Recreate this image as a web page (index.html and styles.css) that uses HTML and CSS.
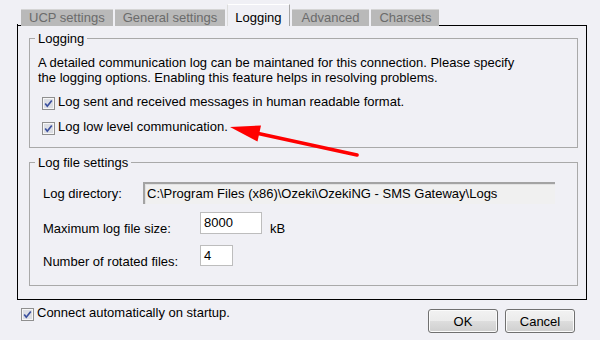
FILE: index.html
```html
<!DOCTYPE html>
<html>
<head>
<meta charset="utf-8">
<link rel="stylesheet" href="styles.css">
</head>
<body>
<div class="dialog">
  <div class="tabs">
    <div class="tab">UCP settings</div>
    <div class="tab">General settings</div>
    <div class="tab active">Logging</div>
    <div class="tab wide">Advanced</div>
    <div class="tab">Charsets</div>
  </div>
  <div class="panel">
    <fieldset class="group group-log">
      <legend>Logging</legend>
      <p class="desc">A detailed communication log can be maintaned for this connection. Please specify<br>the logging options. Enabling this feature helps in resolving problems.</p>
      <div class="check opt"><span class="box"><svg width="13" height="13" viewBox="0 0 13 13"><rect x="0.5" y="0.5" width="12" height="12" fill="#f6f6f6" stroke="#8f8f8f"/><rect x="2" y="2" width="9" height="9" fill="#dcdee4"/><path d="M3.2 6.4 L5.3 9.2 L9.8 3.4" stroke="#3a4f9e" stroke-width="1.7" fill="none"/></svg></span>Log sent and received messages in human readable format.</div>
      <div class="check opt"><span class="box"><svg width="13" height="13" viewBox="0 0 13 13"><rect x="0.5" y="0.5" width="12" height="12" fill="#f6f6f6" stroke="#8f8f8f"/><rect x="2" y="2" width="9" height="9" fill="#dcdee4"/><path d="M3.2 6.4 L5.3 9.2 L9.8 3.4" stroke="#3a4f9e" stroke-width="1.7" fill="none"/></svg></span>Log low level communication.</div>
    </fieldset>
    <fieldset class="group group-file">
      <legend>Log file settings</legend>
      <div class="row row-dir">
        <span class="lbl lbl-dir">Log directory:</span>
        <span class="field readonly">C:\Program Files (x86)\Ozeki\OzekiNG - SMS Gateway\Logs</span>
      </div>
      <div class="row row-size">
        <span class="lbl lbl-low">Maximum log file size:</span>
        <span class="field input size">8000</span>
        <span class="lbl lbl-unit">kB</span>
      </div>
      <div class="row row-rot">
        <span class="lbl lbl-low">Number of rotated files:</span>
        <span class="field input rot">4</span>
      </div>
    </fieldset>
  </div>
  <div class="footer">
    <div class="check"><span class="box"><svg width="13" height="13" viewBox="0 0 13 13"><rect x="0.5" y="0.5" width="12" height="12" fill="#f6f6f6" stroke="#8f8f8f"/><rect x="2" y="2" width="9" height="9" fill="#dcdee4"/><path d="M3.2 6.4 L5.3 9.2 L9.8 3.4" stroke="#3a4f9e" stroke-width="1.7" fill="none"/></svg></span>Connect automatically on startup.</div>
    <div class="buttons">
      <button class="btn">OK</button>
      <button class="btn">Cancel</button>
    </div>
  </div>
  <svg class="arrow" width="600" height="340" viewBox="0 0 600 340">
    <line x1="256" y1="133" x2="357" y2="155" stroke="#ff0000" stroke-width="3.6" stroke-linecap="round"/>
    <polygon points="230,127 261,125.5 257.5,141.5" fill="#ff0000"/>
  </svg>
</div>
</body>
</html>
```

FILE: styles.css
```css
html, body {
  margin: 0;
  padding: 0;
}
body {
  background: #f0f0f5;
  font-family: "Liberation Sans", Arial, sans-serif;
  font-size: 13px;
  line-height: 15px;
  color: #000;
  width: 600px;
  height: 340px;
  overflow: hidden;
}
.dialog {
  position: relative;
  padding: 4px 13px 0 17px;
}
.tabs {
  display: flex;
  align-items: flex-end;
  gap: 2px;
  height: 22px;
}
.tabs::before {
  content: "";
  align-self: stretch;
  width: 4px;
  border-bottom: 1px solid #000;
  border-left: 1px solid #000;
  box-sizing: border-box;
  margin-top: 20px;
  margin-right: -2px;
}
.tabs::after {
  content: "";
  align-self: flex-end;
  flex: 1;
  height: 1px;
  background: #000;
  margin-left: -2px;
}
.tab {
  background: #b9b9b9;
  border-top: 1px solid #d4d4d4;
  color: #6b6b6b;
  line-height: 16px;
  padding: 0 8px;
  white-space: nowrap;
}
.tab.wide {
  padding: 0 10px;
}
.tab.active {
  background: #f0f0f5;
  color: #000;
  border-top: 1px solid #ffffff;
  border-left: 1px solid #dcdcdc;
  border-right: 1px solid #a6a6a6;
  padding: 5px 7px 0 7px;
}
.panel {
  border: 1px solid #000;
  border-top: none;
  padding: 5px 8px 13px 11px;
}
.group {
  margin: 0;
  border: 1px solid #a9a9a9;
  padding: 0 8px;
  min-width: 0;
}
.group legend {
  padding: 0 3px;
  margin-left: -3px;
  line-height: 15px;
}
.group-log {
  padding-top: 9px;
  padding-bottom: 12px;
}
.group-file {
  margin-top: 7px;
  padding-top: 12px;
  padding-bottom: 16px;
}
.desc {
  margin: 0;
}
.check {
  display: flex;
  align-items: flex-start;
  gap: 3px;
  white-space: nowrap;
}
.check .box {
  display: block;
  width: 13px;
  height: 13px;
  margin-top: 3px;
}
.check .box svg {
  display: block;
}
.opt {
  margin-left: 4px;
  margin-top: 9px;
}
.row {
  display: flex;
  padding-left: 5px;
}
.row-dir {
  align-items: center;
}
.row-size {
  margin-top: 8px;
  align-items: flex-start;
}
.row-rot {
  margin-top: 9px;
  align-items: flex-start;
}
.lbl-dir {
  width: 100px;
}
.lbl-low {
  width: 157px;
  padding-top: 9px;
}
.lbl-unit {
  padding-top: 9px;
  margin-left: 8px;
}
.field {
  display: block;
  box-sizing: border-box;
  white-space: nowrap;
}
.readonly {
  width: 412px;
  height: 22px;
  background: #f0f0f0;
  border-top: 2px solid #a3a3a3;
  border-left: 2px solid #a3a3a3;
  box-shadow: inset 1px 1px 0 #e2e2e2;
  padding: 2px 0 0 2px;
}
.input {
  background: #ffffff;
  border: 1px solid #bdbdbd;
  padding: 2px 0 0 3px;
}
.size {
  width: 62px;
  height: 22px;
}
.rot {
  width: 33px;
  height: 21px;
}
.footer {
  display: flex;
  justify-content: space-between;
  align-items: flex-start;
  padding: 5px 12px 0 4px;
}
.buttons {
  display: flex;
  gap: 7px;
  margin-top: 4px;
}
.btn {
  width: 70px;
  height: 24px;
  box-sizing: border-box;
  border: 1px solid #707070;
  border-radius: 3px;
  background: linear-gradient(to bottom, #f2f2f2 0%, #ebebeb 50%, #dddddd 51%, #cfcfcf 100%);
  box-shadow: inset 0 0 0 1px #fbfbfb;
  font-family: "Liberation Sans", Arial, sans-serif;
  font-size: 13px;
  color: #000;
  padding: 0;
}
.arrow {
  position: absolute;
  left: 0;
  top: 0;
  pointer-events: none;
}
```
